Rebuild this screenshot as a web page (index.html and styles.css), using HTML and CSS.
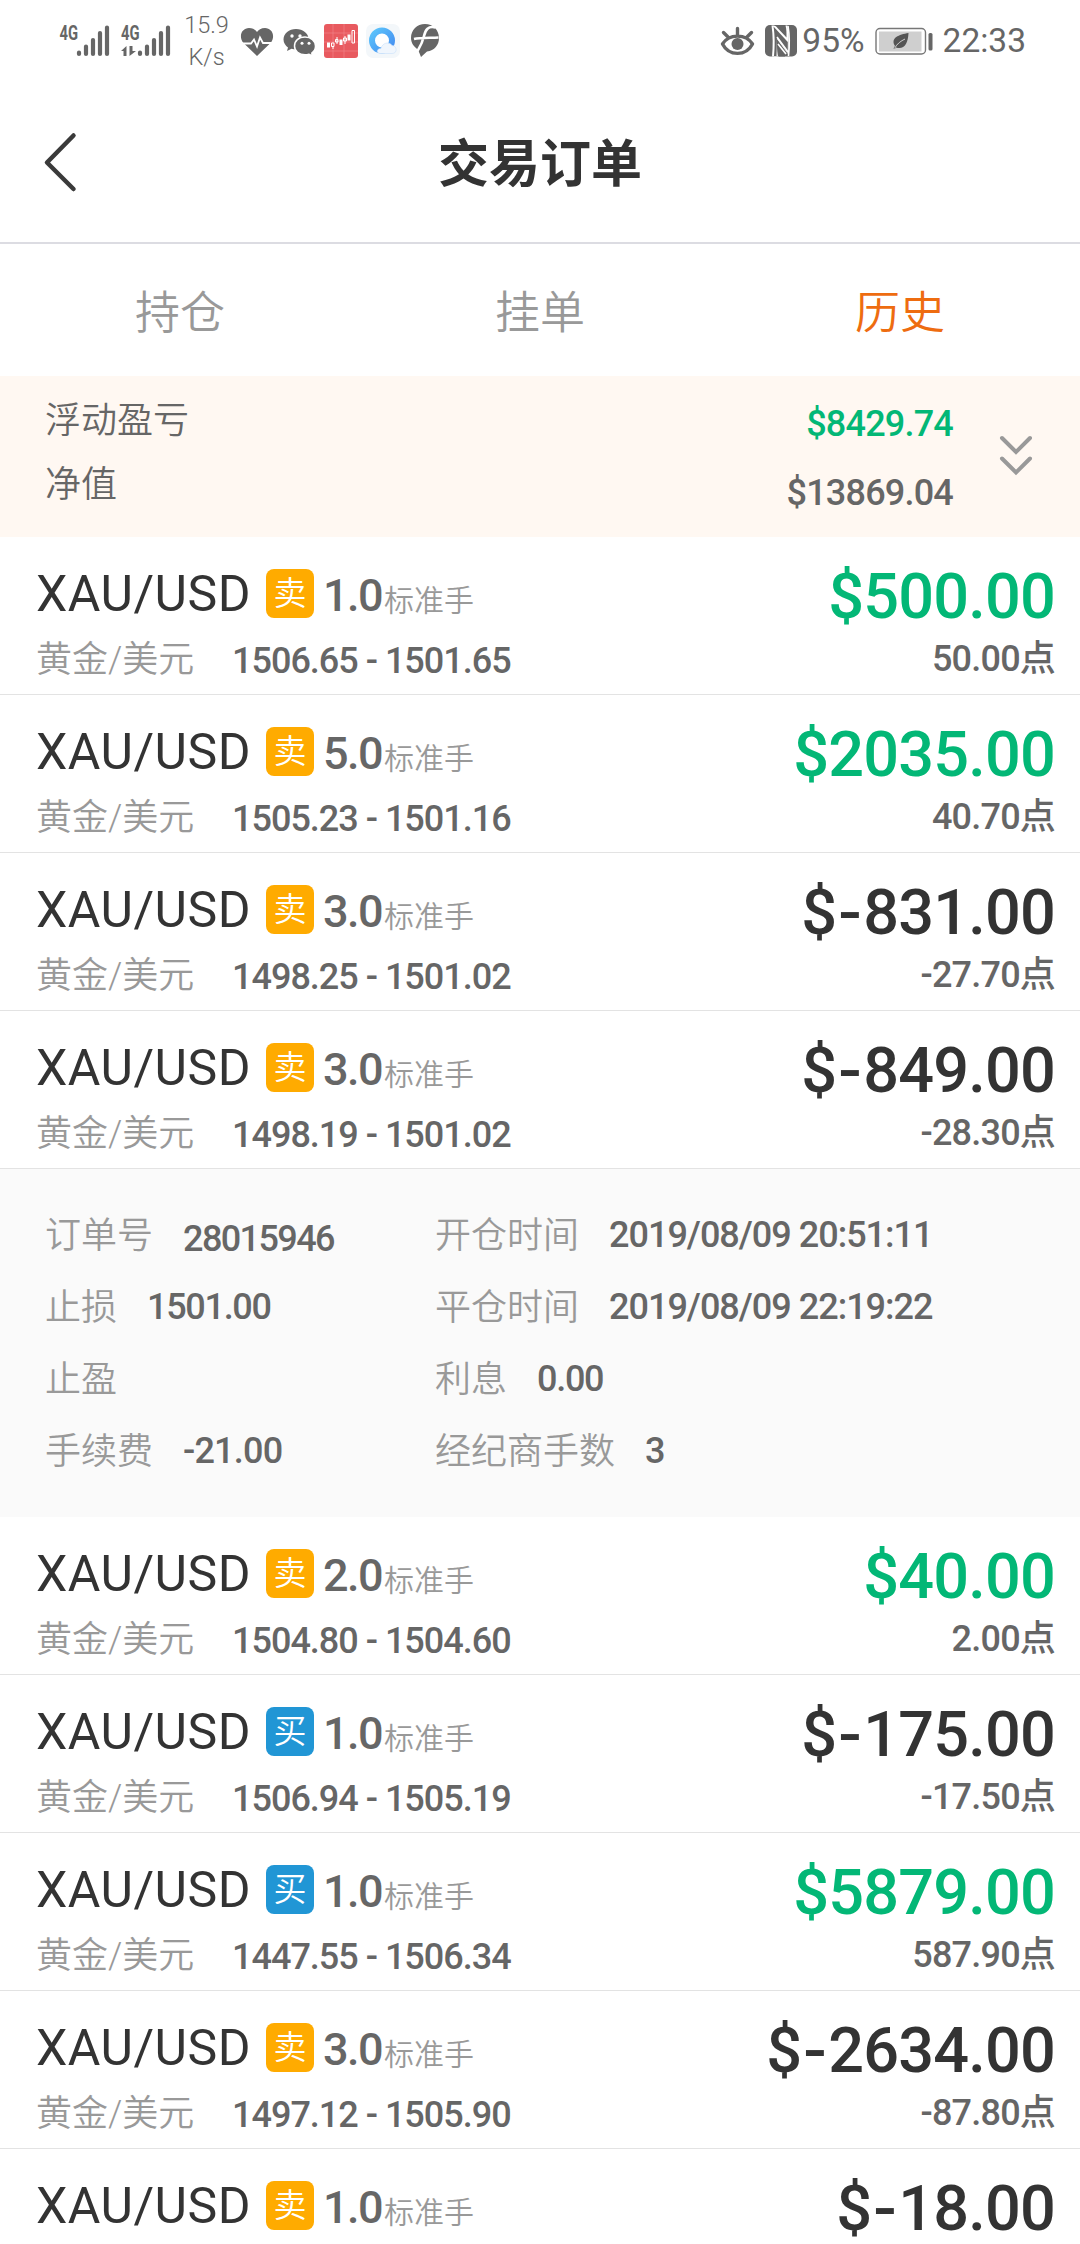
FILE: index.html
```
<!DOCTYPE html>
<html lang="zh-CN">
<head>
<meta charset="utf-8">
<title>交易订单</title>
<link rel="stylesheet" href="styles.css">
</head>
<body>
<div class="status">
  <div class="status-left">
    <svg class="signal" width="54" height="46" viewBox="58 17 54 46">
      <text class="net" transform="translate(59.500 38.5) scale(.74 1)">4G</text>
      <path class="bars" d="M79 51.5V53M86 45.500V53M93 39V53M100 32V53M107 26.500V53"/>
    </svg>
    <svg class="signal two" width="54" height="46" viewBox="120 17 54 46">
      <text class="net" transform="translate(121 38.5) scale(.74 1)">4G</text>
      <path class="bars" d="M140 51.5V53M147 45.500V53M154 39V53M161 32V53M168 26.500V53"/>
      <path fill="#666" d="M121 50L126.500 45V55H123.500V50ZM129.500 45H132.500V50H136L129.500 55Z"/>
    </svg>
    <div class="speed">15.9<br>K/s</div>
    <svg class="heart" width="34" height="34" viewBox="240 23 34 34">
      <path fill="#666" d="M257 55L243.500 42C238 35 242 27 249 27C253 27 255.500 29 257 31C258.500 29 261 27 265 27C272 27 276 35 270.500 42Z"/>
      <path fill="none" stroke="#fff" stroke-width="1.8" d="M242 42.500H251L254 38.500L257 45.500L260 36.500L263 42H272"/>
    </svg>
    <svg class="wechat" width="34" height="34" viewBox="282 23 34 34">
      <path fill="#666" d="M296 28C289 28 283.500 32.500 283.500 38.500C283.500 42 285.500 44.500 288 46.500L287 50L291.500 47.800C293 48.200 294.500 48.300 296 48.300C303 48.300 308.500 44 308.500 38C308.500 32.500 303 28 296 28Z"/>
      <path fill="#666" stroke="#fff" stroke-width="1.5" d="M305 36C298.500 36 294.500 40 294.500 45C294.500 50 299 53.800 305 53.800C306.500 53.800 308 53.500 309 53.200L312.500 55L311.800 52C314 50.500 315.500 48 315.500 45C315.500 40 311 36 305 36Z"/>
      <g fill="#fff"><circle cx="292" cy="35" r="1.700"/><circle cx="300" cy="35" r="1.700"/><circle cx="302" cy="42.300" r="1.500"/><circle cx="309" cy="42.300" r="1.500"/></g>
    </svg>
    <svg class="stock" width="34" height="34" viewBox="324 24 34 34">
      <rect x="324" y="24" width="34" height="34" rx="3" fill="#e85a5f"/>
      <path stroke="#f08387" stroke-width=".7" d="M324 33H358M324 42H358M324 51H358M333 24V58M344 24V58"/>
      <path stroke="#fff" stroke-width="3" d="M328.500 42.500V47.500M341 39.500V45M349 34.500V40.500"/>
      <path fill="none" stroke="#fff" stroke-width="1" d="M331.500 43H334V46.500H331.500ZM333 46V49M335.500 39.500H338V42H335.500ZM337 37V44M343.500 38H346.500V41H343.500ZM345 36V44M352 30.500H354.500V43H352Z"/>
    </svg>
    <svg class="browser" width="34" height="34" viewBox="366 24 34 34">
      <defs><linearGradient id="ring" x1="0" y1="0" x2="1" y2="1"><stop offset="0" stop-color="#5cc4fb"/><stop offset="1" stop-color="#438df1"/></linearGradient></defs>
      <rect x="366" y="24" width="34" height="34" rx="7" fill="#f3f7fa"/>
      <circle cx="382" cy="40.500" r="10" fill="#fff" stroke="url(#ring)" stroke-width="6"/>
      <path fill="#f0f6fd" stroke="#c9e0fa" stroke-width=".6" d="M380 53.500C376 53 376.500 48.500 381 48.500C382 43 389 41 392 45.500C397 45.500 398 53.500 392 53.500Z"/>
    </svg>
    <svg class="flip" width="30" height="36" viewBox="410 23 30 36">
      <path fill="#666" d="M425 24C417 24 411 30 411 38C411 43 414 47 418 49.500L421 57L427 51.500C434.500 50.500 439 45 439 38C439 30 433 24 425 24Z"/>
      <path fill="none" stroke="#fff" stroke-width="2.600" d="M435.500 27.500C428 25.500 425.500 30 424 36C422 44 420.500 46 417.500 51M414 39C420 37.500 430 38 438.500 37.500"/>
    </svg>
  </div>
  <div class="status-right">
    <svg width="36" height="34" viewBox="720 23 36 34">
      <path fill="none" stroke="#666" stroke-width="3.400" stroke-linecap="round" stroke-linejoin="round" d="M722.500 43C729 32.500 746 32.500 752.500 43C746 55.500 729 55.500 722.500 43ZM737.500 34V27.500M728 36L723.500 31.500M747 36L751.500 31.500"/>
      <circle cx="737.500" cy="43" r="6" fill="#666"/>
    </svg>
    <svg class="nfc" width="34" height="34" viewBox="764 23 34 34">
      <rect x="765" y="24" width="32" height="31.500" rx="5" fill="#666"/>
      <path fill="#fff" d="M771.500 24.500C775 24.500 776 25 777.500 27L786.500 36.500C786.500 32 786.500 28 785.500 24.500H787.500C789 34 789 46 788 53L777 38V45C777 49 777.500 52 778 55.500H772C773 46 773 34 771.500 24.500Z"/>
      <path fill="#666" d="M773.500 25.500L787.800 41V52L777 36.500L776.500 55H774C775 46 775 34 773.500 25.500ZM778 44L785 53V55.500H779Z"/>
      <path fill="none" stroke="#fff" stroke-width="1.600" d="M788 25C789.500 34 789.500 46 788.500 55M777 36L788 51M778 43L786 53"/>
    </svg>
    <span class="clock pct">95%</span>
    <svg class="battery" width="60" height="30" viewBox="873 25 60 30">
      <rect x="875" y="27.500" width="49.500" height="25.500" rx="4" fill="#fff" stroke="#777" stroke-width="1.400"/>
      <rect x="878" y="30.500" width="42.500" height="20" fill="#cfcfcf"/>
      <rect x="927.500" y="32" width="4" height="17.500" rx="1.500" fill="#666"/>
      <path fill="#555" d="M907.500 32C898 33.500 889 37 894 45C891.500 48 893 49 895 46.500C903 49 907 43 907.500 32Z"/>
      <path fill="none" stroke="#cfcfcf" stroke-width="1" d="M893.500 47.500C896 42.500 900 40 904 38"/>
    </svg>
    <span class="clock">22:33</span>
  </div>
</div>

<header class="navbar">
  <svg class="back" width="36" height="62" viewBox="0 0 36 62"><path fill="none" stroke="#3a3a3a" stroke-width="4.500" stroke-linecap="round" stroke-linejoin="round" d="M31.500 4.500L5 31.500L31.500 58"/></svg>
  <h1 class="title">交易订单</h1>
</header>

<nav class="tabs">
  <a class="tab">持仓</a>
  <a class="tab">挂单</a>
  <a class="tab active">历史</a>
</nav>

<section class="summary">
  <div class="summary-labels"><div>浮动盈亏</div><div>净值</div></div>
  <div class="summary-values"><div class="green">$8429.74</div><div>$13869.04</div></div>
  <svg class="expand" width="34" height="42" viewBox="0 0 34 42"><path fill="none" stroke="#999" stroke-width="4" stroke-linecap="round" d="M3 3L17 17L31 3M3 23.500L17 37.500L31 23.500"/></svg>
</section>

<main>
  <article class="order">
    <div class="left">
      <div class="head"><span class="pair">XAU/USD</span><span class="side sell">卖</span><span class="lots">1.0</span><span class="unit">标准手</span></div>
      <div class="sub"><span class="name">黄金/美元</span><span class="price">1506.65 - 1501.65</span></div>
    </div>
    <div class="right"><div class="amount green">$500.00</div><div class="points">50.00点</div></div>
  </article>
  <article class="order">
    <div class="left">
      <div class="head"><span class="pair">XAU/USD</span><span class="side sell">卖</span><span class="lots">5.0</span><span class="unit">标准手</span></div>
      <div class="sub"><span class="name">黄金/美元</span><span class="price">1505.23 - 1501.16</span></div>
    </div>
    <div class="right"><div class="amount green">$2035.00</div><div class="points">40.70点</div></div>
  </article>
  <article class="order">
    <div class="left">
      <div class="head"><span class="pair">XAU/USD</span><span class="side sell">卖</span><span class="lots">3.0</span><span class="unit">标准手</span></div>
      <div class="sub"><span class="name">黄金/美元</span><span class="price">1498.25 - 1501.02</span></div>
    </div>
    <div class="right"><div class="amount">$<span class="minus">-</span>831.00</div><div class="points">-27.70点</div></div>
  </article>
  <article class="order">
    <div class="left">
      <div class="head"><span class="pair">XAU/USD</span><span class="side sell">卖</span><span class="lots">3.0</span><span class="unit">标准手</span></div>
      <div class="sub"><span class="name">黄金/美元</span><span class="price">1498.19 - 1501.02</span></div>
    </div>
    <div class="right"><div class="amount">$<span class="minus">-</span>849.00</div><div class="points">-28.30点</div></div>
  </article>

  <section class="detail">
    <div class="field"><span class="label">订单号</span><span class="value ticket">28015946</span></div>
    <div class="field"><span class="label">开仓时间</span><span class="value time">2019/08/09 20:51:11</span></div>
    <div class="field"><span class="label">止损</span><span class="value">1501.00</span></div>
    <div class="field"><span class="label">平仓时间</span><span class="value time">2019/08/09 22:19:22</span></div>
    <div class="field"><span class="label">止盈</span></div>
    <div class="field"><span class="label">利息</span><span class="value">0.00</span></div>
    <div class="field"><span class="label">手续费</span><span class="value fee">-21.00</span></div>
    <div class="field"><span class="label">经纪商手数</span><span class="value">3</span></div>
  </section>

  <article class="order">
    <div class="left">
      <div class="head"><span class="pair">XAU/USD</span><span class="side sell">卖</span><span class="lots">2.0</span><span class="unit">标准手</span></div>
      <div class="sub"><span class="name">黄金/美元</span><span class="price">1504.80 - 1504.60</span></div>
    </div>
    <div class="right"><div class="amount green">$40.00</div><div class="points">2.00点</div></div>
  </article>
  <article class="order">
    <div class="left">
      <div class="head"><span class="pair">XAU/USD</span><span class="side buy">买</span><span class="lots">1.0</span><span class="unit">标准手</span></div>
      <div class="sub"><span class="name">黄金/美元</span><span class="price">1506.94 - 1505.19</span></div>
    </div>
    <div class="right"><div class="amount">$<span class="minus">-</span>175.00</div><div class="points">-17.50点</div></div>
  </article>
  <article class="order">
    <div class="left">
      <div class="head"><span class="pair">XAU/USD</span><span class="side buy">买</span><span class="lots">1.0</span><span class="unit">标准手</span></div>
      <div class="sub"><span class="name">黄金/美元</span><span class="price">1447.55 - 1506.34</span></div>
    </div>
    <div class="right"><div class="amount green">$5879.00</div><div class="points">587.90点</div></div>
  </article>
  <article class="order">
    <div class="left">
      <div class="head"><span class="pair">XAU/USD</span><span class="side sell">卖</span><span class="lots">3.0</span><span class="unit">标准手</span></div>
      <div class="sub"><span class="name">黄金/美元</span><span class="price">1497.12 - 1505.90</span></div>
    </div>
    <div class="right"><div class="amount">$<span class="minus">-</span>2634.00</div><div class="points">-87.80点</div></div>
  </article>
  <article class="order">
    <div class="left">
      <div class="head"><span class="pair">XAU/USD</span><span class="side sell">卖</span><span class="lots">1.0</span><span class="unit">标准手</span></div>
    </div>
    <div class="right"><div class="amount">$<span class="minus">-</span>18.00</div></div>
  </article>
</main>
</body>
</html>
```
FILE: styles.css
```
* { box-sizing: border-box; }
body {
  margin: 0;
  width: 1080px;
  height: 2244px;
  overflow: hidden;
  background: #fff;
  color: #666;
  font-family: Roboto, "Noto Sans CJK SC", sans-serif;
  font-size: 36px;
}
svg { display: block; flex: none; }

.status {
  height: 84px;
  padding: 0 54px 0 58px;
  display: flex;
  justify-content: space-between;
}
.status-left, .status-right { display: flex; align-items: center; height: 82px; }
.net { font-size: 20px; font-weight: 700; fill: #666; }
.bars { fill: none; stroke: #666; stroke-width: 4.2; stroke-linecap: round; }
.signal.two { margin-left: 8px; }
.speed { width: 66px; padding-right: 1px; text-align: center; font-size: 23.5px; line-height: 32px; font-weight: 300; }
.wechat { margin-left: 8px; }
.stock { margin-left: 8px; }
.browser { margin-left: 8px; }
.flip { margin-left: 10px; }
.nfc { margin-left: 8px; }
.clock { font-size: 33.5px; line-height: 84px; }
.pct { margin-left: 4px; }
.battery { margin: 0 9px 0 9px; }

.navbar {
  height: 160px;
  border-bottom: 2px solid #dcdce2;
  display: grid;
  grid-template-columns: 120px 1fr 120px;
}
.back { margin: 47px 0 0 42px; }
.title {
  margin: 0;
  padding-top: 43px;
  line-height: 76px;
  font-size: 51px;
  font-weight: 700;
  color: #333;
  text-align: center;
}

.tabs { height: 132px; display: grid; grid-template-columns: repeat(3, 1fr); }
.tab { text-align: center; font-size: 45px; line-height: 140px; height: 132px; font-weight: 350; color: #999; }
.tab.active { color: #ee6c10; }

.summary { height: 161px; padding: 0 47px 0 45px; display: flex; background: #fff8f2; }
.summary-labels { flex: 1; padding-top: 13px; line-height: 64px; font-weight: 350; }
.summary-values {
  padding-top: 14px;
  line-height: 69px;
  text-align: right;
  font-weight: 500;
  letter-spacing: -.8px;
}
.expand { margin: 59px 0 0 46px; }
.green { color: #03b776; }

.order { height: 158px; border-bottom: 1px solid #e3e3e3; padding: 0 25px 0 36px; display: flex; justify-content: space-between; }
.left { padding-top: 32px; }
.head { height: 53px; display: flex; align-items: flex-start; }
.pair { width: 230px; font-size: 50px; line-height: 50px; letter-spacing: .5px; color: #333; }
.side { width: 48px; height: 49px; border-radius: 8px; text-align: center; font-size: 33px; line-height: 50px; font-weight: 350; color: #fff; }
.sell { background: #ffab00; }
.buy { background: #2196d5; }
.lots { width: 62px; padding-left: 9px; font-size: 45px; line-height: 54px; font-weight: 500; letter-spacing: -1.6px; white-space: nowrap; }
.unit { padding-left: 8px; font-size: 30px; line-height: 64px; font-weight: 350; color: #999; }
.sub { display: flex; margin-top: 8px; line-height: 60px; white-space: nowrap; }
.name { width: 196px; font-weight: 350; color: #999; }
.price { font-weight: 500; line-height: 62px; letter-spacing: -1px; }
.right { padding-top: 20px; text-align: right; white-space: nowrap; }
.amount { font-size: 63px; line-height: 79px; font-weight: 500; letter-spacing: -.8px; }
.amount:not(.green) { color: #333; }
.minus { display: inline-block; width: 27px; text-align: center; transform: scaleX(1.1); }
.points { line-height: 47px; font-weight: 500; letter-spacing: -.8px; }

.detail {
  height: 348px;
  padding: 30px 45px;
  background: #fafafa;
  display: grid;
  grid-template-columns: 390px 1fr;
  grid-auto-rows: 72px;
}
.field { display: flex; line-height: 72px; white-space: nowrap; }
.label { margin-right: 30px; line-height: 74px; font-weight: 350; color: #999; }
.value { font-weight: 500; letter-spacing: -1.3px; }
.time { letter-spacing: -1px; }
.fee { letter-spacing: -.8px; }
.ticket { padding-top: 4px; letter-spacing: -1.6px; }
```
